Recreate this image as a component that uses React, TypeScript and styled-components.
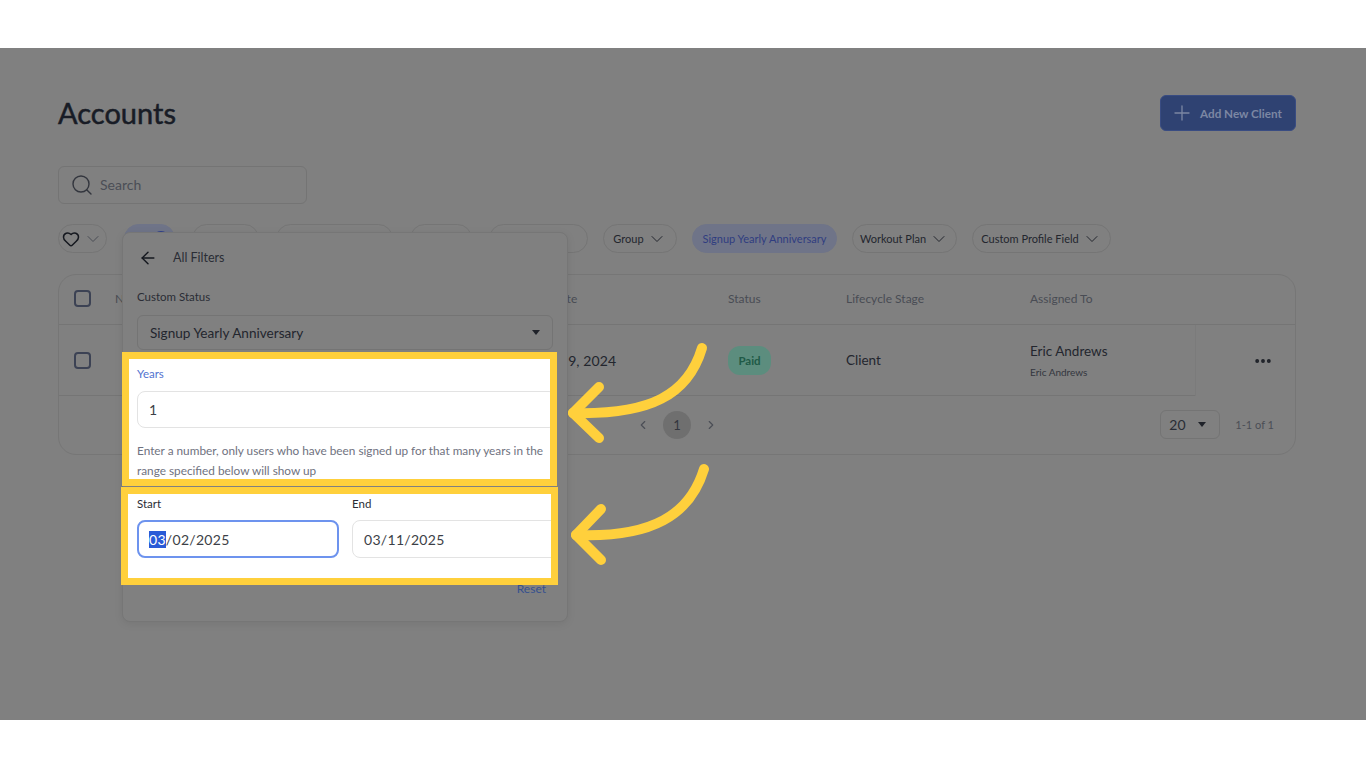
import React from "react";
import styled, { createGlobalStyle } from "styled-components";
import {
  ArrowLeft,
  ChevronDown,
  ChevronLeft,
  ChevronRight,
  Ellipsis,
  Heart,
  Plus,
  Search,
} from "lucide-react";

const GlobalStyle = createGlobalStyle`
  html, body {
    margin: 0;
    padding: 0;
    background: #fff;
  }
  * {
    box-sizing: border-box;
  }
  body {
    font-family: "Lato", "Noto Sans", sans-serif;
    color: #262a33;
  }
`;

const App: React.FC = () => {
  return (
    <>
      <GlobalStyle />
      <Stage>
        <Header>
          <Title>Accounts</Title>
          <AddButton>
            <Plus size={24} strokeWidth={1.3} />
            Add New Client
          </AddButton>
        </Header>

        <SearchBox>
          <Search size={24} strokeWidth={1.4} />
          Search
        </SearchBox>

        <ChipBar>
          <ChipGroup $gap={17}>
            <Chip $width={49}>
              <Heart size={18} strokeWidth={2} color="#15181f" />
              <ChevronDown size={20} strokeWidth={1.2} color="#4a4d55" />
            </Chip>
            <Chip $width={51} $active>
              <Badge />
            </Chip>
            <Chip $width={67} />
            <Chip $width={117} />
            <Chip $width={62} />
            <Chip $width={99} />
          </ChipGroup>
          <ChipGroup $gap={15}>
            <Chip $width={74}>
              Group
              <ChevronDown size={20} strokeWidth={1.2} />
            </Chip>
            <Chip $width={145} $active>
              Signup Yearly Anniversary
            </Chip>
            <Chip $width={105}>
              Workout Plan
              <ChevronDown size={20} strokeWidth={1.2} />
            </Chip>
            <Chip $width={139}>
              Custom Profile Field
              <ChevronDown size={20} strokeWidth={1.2} />
            </Chip>
          </ChipGroup>
        </ChipBar>

        <TableCard>
          <HeadRow>
            <CheckBox />
            <HeadCell>Name</HeadCell>
            <HeadCell>Signup Date</HeadCell>
            <HeadCell>Status</HeadCell>
            <HeadCell>Lifecycle Stage</HeadCell>
            <HeadCell>Assigned To</HeadCell>
          </HeadRow>
          <BodyRow>
            <RowMain>
              <CheckBox />
              <span />
              <DateCell>October 9, 2024</DateCell>
              <span>
                <PaidBadge>Paid</PaidBadge>
              </span>
              <BodyCell>Client</BodyCell>
              <Assignee>
                <BodyCell>Eric Andrews</BodyCell>
                <AssigneeSub>Eric Andrews</AssigneeSub>
              </Assignee>
            </RowMain>
            <ActionCell>
              <Ellipsis size={20} strokeWidth={2.6} color="#1d2027" />
            </ActionCell>
          </BodyRow>
          <Footer>
            <Pager>
              <ChevronLeft size={14} strokeWidth={2} />
              <PageNumber>1</PageNumber>
              <ChevronRight size={14} strokeWidth={2} />
            </Pager>
            <PerPage>
              20
              <Caret />
            </PerPage>
            <RangeText>1-1 of 1</RangeText>
          </Footer>
        </TableCard>

        <FilterPanel>
          <PanelHead>
            <ArrowLeft size={20} strokeWidth={1.7} color="#15181f" />
            All Filters
          </PanelHead>
          <PanelSection>
            <FieldLabel>Custom Status</FieldLabel>
            <SelectBox>
              Signup Yearly Anniversary
              <Caret />
            </SelectBox>
          </PanelSection>

          <YearsHighlight>
            <FieldLabel $accent>Years</FieldLabel>
            <Input>1</Input>
            <HelpText>
              Enter a number, only users who have been signed up for that many
              years in the range specified below will show up
            </HelpText>
          </YearsHighlight>

          <DatesHighlight>
            <DateField>
              <FieldLabel>Start</FieldLabel>
              <Input $focused $width={202}>
                <Selected>03</Selected>/02/2025
              </Input>
            </DateField>
            <DateField>
              <FieldLabel>End</FieldLabel>
              <Input $width={215}>03/11/2025</Input>
            </DateField>
          </DatesHighlight>

          <ResetLink>Reset</ResetLink>
        </FilterPanel>

        <Arrows viewBox="0 0 160 240" aria-hidden="true">
          <g
            fill="none"
            stroke="#ffd03c"
            strokeWidth="10"
            strokeLinecap="round"
            strokeLinejoin="round"
          >
            <path d="M142 8 C128 55 90 75 13 73" />
            <path d="M39 47 L13 73 L39 98" />
            <path d="M144 129 C130 175 92 198 16 195" />
            <path d="M41 169 L16 195 L41 220" />
          </g>
        </Arrows>
      </Stage>
    </>
  );
};

const Stage = styled.div`
  position: relative;
  margin-top: 48px;
  width: 1366px;
  height: 672px;
  padding: 47px 70px 0 58px;
  background: #808080;
  overflow: hidden;
`;

const Header = styled.div`
  display: flex;
  align-items: center;
  justify-content: space-between;
  height: 36px;
`;

const Title = styled.h1`
  margin: 0 0 2px;
  font-size: 29px;
  font-weight: 400;
  -webkit-text-stroke: 0.5px #181c26;
  color: #181c26;
`;

const AddButton = styled.div`
  display: flex;
  align-items: center;
  gap: 6px;
  width: 136px;
  height: 36px;
  padding-left: 9px;
  border-radius: 6px;
  border: 1px solid #394c82;
  background: #2f4272;
  color: #7c87a3;
  font-size: 11.7px;
  font-weight: 700;
  white-space: nowrap;
`;

const SearchBox = styled.div`
  display: flex;
  align-items: center;
  gap: 6px;
  width: 249px;
  height: 38px;
  margin-top: 35px;
  padding: 0 0 1px 11px;
  border: 1px solid #747474;
  border-radius: 6px;
  color: #4b4e56;
  font-size: 14px;

  svg {
    color: #33363e;
  }
`;

const ChipBar = styled.div`
  display: flex;
  gap: 15px;
  margin-top: 20px;
`;

const ChipGroup = styled.div<{ $gap: number }>`
  display: flex;
  gap: ${(p) => p.$gap}px;
`;

const Chip = styled.div<{ $width: number; $active?: boolean }>`
  display: flex;
  align-items: center;
  justify-content: center;
  gap: 3px;
  width: ${(p) => p.$width}px;
  height: 29px;
  border-radius: 15px;
  border: 1px solid ${(p) => (p.$active ? "#6f7488" : "#757575")};
  background: ${(p) => (p.$active ? "#6f7488" : "transparent")};
  color: ${(p) => (p.$active ? "#2f3d80" : "#23262e")};
  font-size: 11px;
  white-space: nowrap;

  svg {
    flex: none;
  }
`;

const Badge = styled.span`
  width: 16px;
  height: 16px;
  margin-left: 23px;
  border-radius: 50%;
  background: #2f3f88;
`;

const TableCard = styled.div`
  margin-top: 21px;
  width: 1238px;
  height: 181px;
  border: 1px solid #767676;
  border-radius: 18px;
  font-size: 12px;
`;

const columns = "41px 398px 215px 118px 184px";

const HeadRow = styled.div`
  display: grid;
  grid-template-columns: ${columns} 1fr;
  align-items: center;
  height: 50px;
  padding: 0 0 3px 15px;
  border-bottom: 1px solid #757575;
`;

const HeadCell = styled.span`
  color: #494c54;
  font-size: 12px;
`;

const CheckBox = styled.span`
  display: block;
  width: 17px;
  height: 17px;
  border: 2px solid #3c4254;
  border-radius: 4px;
`;

const BodyRow = styled.div`
  display: flex;
  height: 71px;
`;

const RowMain = styled.div`
  display: grid;
  grid-template-columns: ${columns} 1fr;
  align-items: center;
  flex: 1;
  padding-left: 15px;
  border-bottom: 1px solid #757575;
`;

const BodyCell = styled.span`
  color: #23262e;
  font-size: 13.5px;
`;

const DateCell = styled(BodyCell)`
  font-size: 14px;
  letter-spacing: 0.1px;
  white-space: nowrap;
`;

const PaidBadge = styled.span`
  display: inline-flex;
  align-items: center;
  justify-content: center;
  width: 43px;
  height: 29px;
  border-radius: 12px;
  background: #5c8d7e;
  color: #1f5a47;
  font-size: 11.5px;
  font-weight: 700;
`;

const Assignee = styled.div`
  display: flex;
  flex-direction: column;
  gap: 7px;
`;

const AssigneeSub = styled.span`
  color: #33363e;
  font-size: 10px;
`;

const ActionCell = styled.div`
  display: flex;
  align-items: center;
  justify-content: flex-end;
  width: 100px;
  padding-right: 22px;
  border-left: 1px solid #7b7b7b;
`;

const Footer = styled.div`
  display: flex;
  align-items: center;
  height: 57px;
  padding: 0 21px 0 577px;
  color: #4b4e56;
`;

const Pager = styled.div`
  display: flex;
  align-items: center;
  gap: 13px;
  margin-right: auto;
`;

const PageNumber = styled.span`
  display: flex;
  align-items: center;
  justify-content: center;
  width: 28px;
  height: 28px;
  border-radius: 50%;
  background: #6f6f6f;
  color: #33363e;
  font-size: 13px;
`;

const PerPage = styled.div`
  display: flex;
  align-items: center;
  justify-content: space-between;
  width: 60px;
  height: 29px;
  padding: 0 13px 0 8px;
  border: 1px solid #747474;
  border-radius: 6px;
  color: #2a2d35;
  font-size: 14px;
`;

const RangeText = styled.span`
  margin-left: 15px;
  font-size: 11px;
`;

const Caret = styled.span`
  width: 0;
  height: 0;
  border-left: 4px solid transparent;
  border-right: 4px solid transparent;
  border-top: 5px solid #1f2229;
`;

const FilterPanel = styled.div`
  position: absolute;
  left: 122px;
  top: 184px;
  width: 446px;
  height: 390px;
  border: 1px solid #767676;
  border-radius: 8px;
  background: #808080;
  box-shadow: 0 2px 8px rgba(0, 0, 0, 0.08);
`;

const PanelHead = styled.div`
  display: flex;
  align-items: center;
  gap: 15px;
  height: 49px;
  padding: 0 0 0 15px;
  margin-bottom: 7px;
  color: #2a2d35;
  font-size: 12.5px;
`;

const PanelSection = styled.div`
  padding: 0 14px;
  height: 63px;
`;

const FieldLabel = styled.div<{ $accent?: boolean }>`
  height: 16px;
  line-height: 16px;
  color: ${(p) => (p.$accent ? "#5373cf" : "#2a2d35")};
  font-size: 11.5px;
`;

const SelectBox = styled.div`
  display: flex;
  align-items: center;
  justify-content: space-between;
  height: 35px;
  margin-top: 10px;
  padding: 0 12px;
  border: 1px solid #747474;
  border-radius: 6px;
  color: #23262e;
  font-size: 13.6px;
`;

const YearsHighlight = styled.div`
  width: 435px;
  height: 134px;
  margin-left: -1px;
  padding: 7px 0 0 8px;
  border: 7px solid #ffd03c;
  background: #fff;
  overflow: hidden;
`;

const DatesHighlight = styled.div`
  display: flex;
  gap: 13px;
  width: 437px;
  height: 98px;
  margin: 1px 0 0 -2px;
  padding: 2px 0 0 9px;
  border: 7px solid #ffd03c;
  background: #fff;
  overflow: hidden;
`;

const DateField = styled.div`
  flex: none;
  width: 202px;
`;

const Input = styled.div<{ $focused?: boolean; $width?: number }>`
  display: flex;
  align-items: center;
  width: ${(p) => p.$width ?? 420}px;
  height: ${(p) => (p.$width ? 38 : 37)}px;
  margin-top: ${(p) => (p.$width ? 8 : 9)}px;
  padding: 0 ${(p) => (p.$focused ? 10 : 11)}px;
  border: ${(p) => (p.$focused ? "2px solid #6d93ee" : "1px solid #e3e3e3")};
  border-radius: 8px;
  color: #3c3f47;
  font-size: 14px;
  letter-spacing: 0.3px;
  white-space: pre;
`;

const Selected = styled.span`
  background: #2a5bd7;
  color: #fff;
`;

const HelpText = styled.p`
  width: 412px;
  margin: 13px 0 0;
  color: #6f7280;
  font-size: 11.8px;
  line-height: 20px;
`;

const ResetLink = styled.div`
  margin-top: -4px;
  padding-right: 21px;
  color: #36508f;
  font-size: 12px;
  text-align: right;
`;

const Arrows = styled.svg`
  position: absolute;
  left: 560px;
  top: 292px;
  width: 160px;
  height: 240px;
`;

export default App;
